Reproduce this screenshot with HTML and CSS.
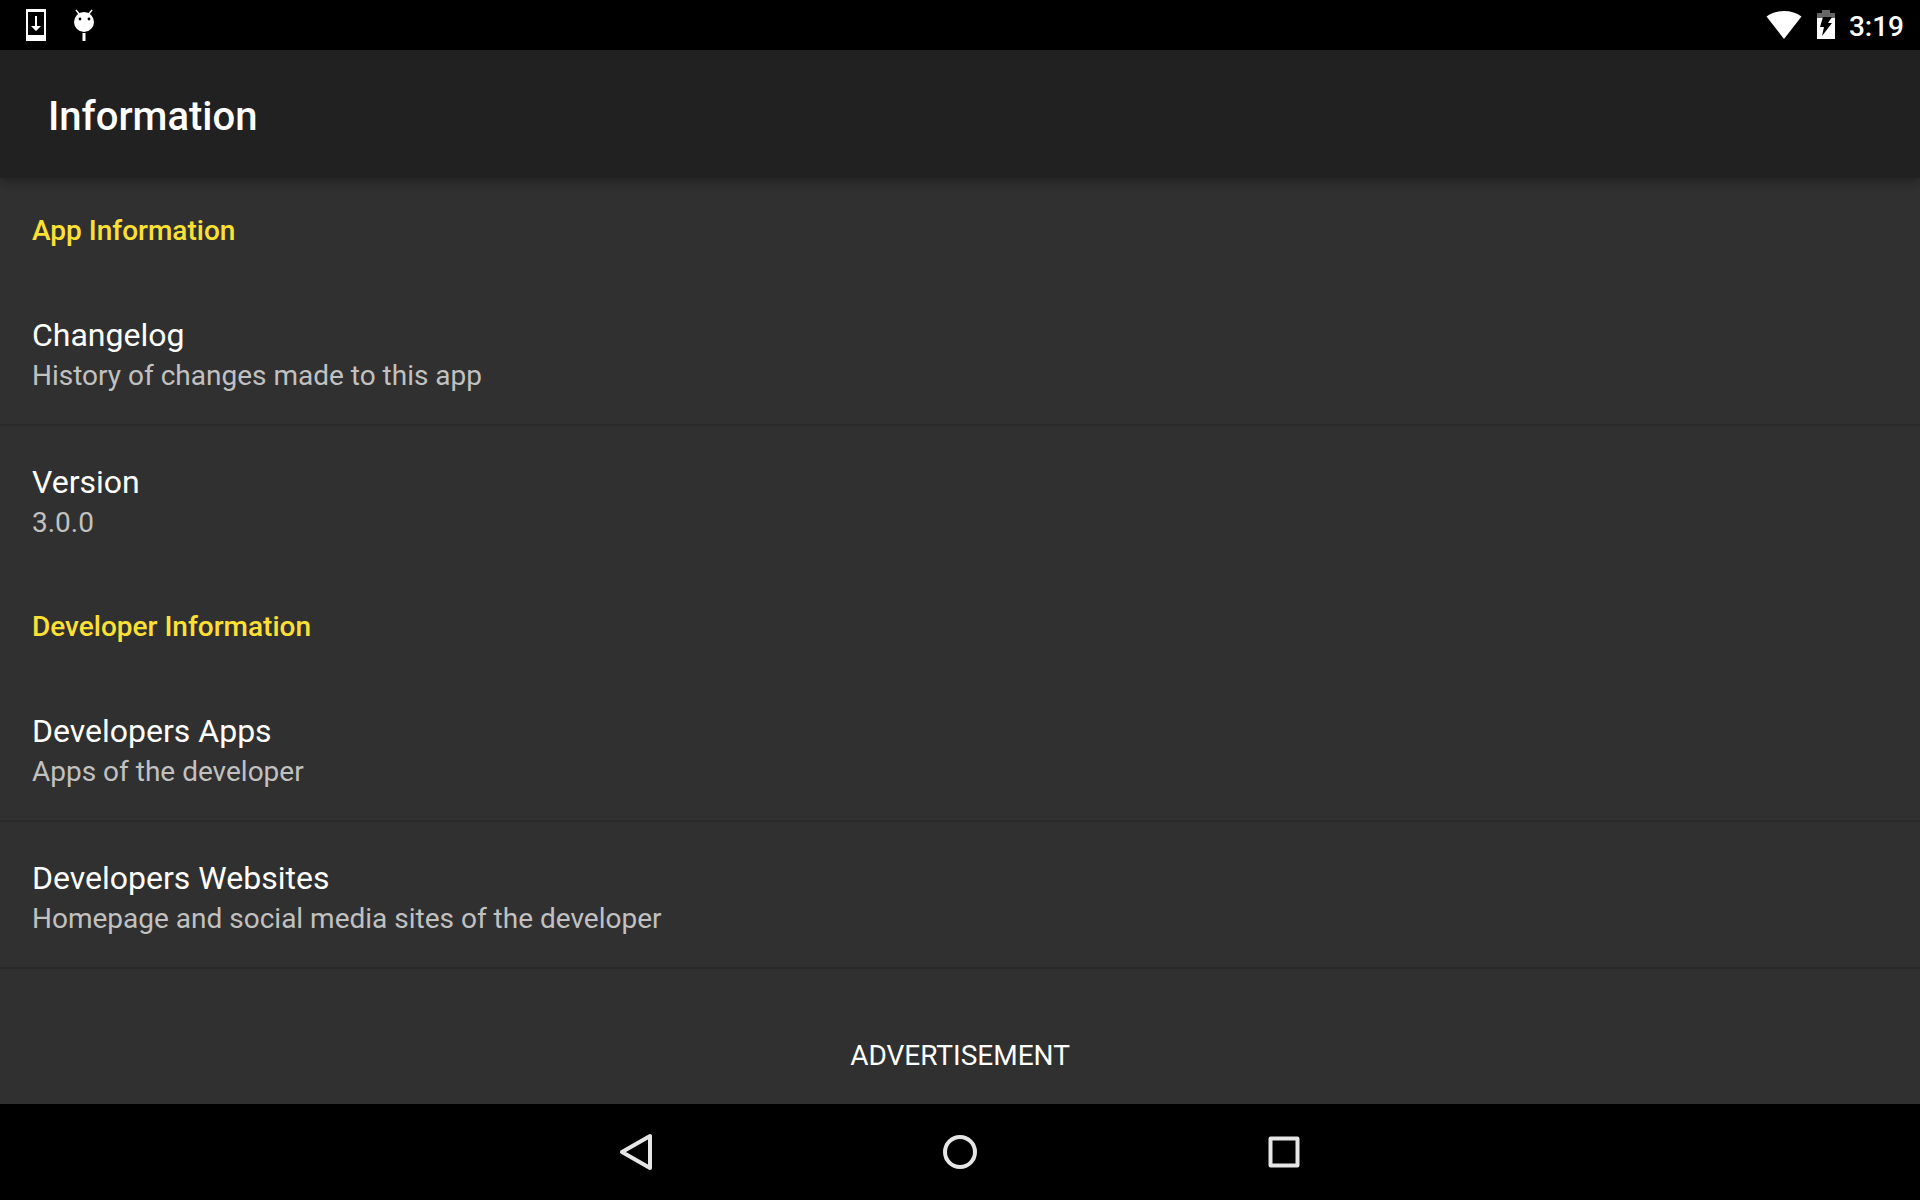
FILE: index.html
```
<!DOCTYPE html>
<html lang="en">
<head>
  <meta charset="UTF-8" />
  <meta name="viewport" content="width=device-width, initial-scale=1.0"/>
  <title>Information</title>
  <link rel="stylesheet" href="styles.css">
</head>
<body>

<div class="status-bar">
  <div class="status-icons">
    <svg width="22" height="32" viewBox="0 0 22 32" fill="#fff">
      <path fill-rule="evenodd" d="M1 0h20v32H1zM3 3v23h16V3z"/>
      <path d="M10 7h2v10h4l-5 5-5-5h4z"/>
    </svg>
    <svg width="22" height="32" viewBox="0 0 22 32">
      <path d="M3 1l4 5M19 1l-4 5" stroke="#fff" stroke-width="1.5" fill="none"/>
      <circle cx="11" cy="13" r="10" fill="#fff"/>
      <circle cx="7" cy="10" r="1.4"/>
      <circle cx="16" cy="10" r="1.4"/>
      <path d="M9.5 24h3v8h-3z" fill="#fff"/>
    </svg>
  </div>
  <div class="status-right">
    <svg class="wifi" width="36" height="30" viewBox="0 0 36 30" fill="#fff">
      <path d="M18 29L.5 6.500Q8 1 18 1T35.500 6.500z"/>
    </svg>
    <svg class="battery" width="20" height="30" viewBox="0 0 20 30">
      <path d="M6 0h8v3h5v5H1V3h5z" fill="#666"/>
      <path d="M1 8h18v21H1z" fill="#fff"/>
      <path d="M7 7h9l-4 6h4L6 26l2-9H4z"/>
    </svg>
    <span class="clock">3:19</span>
  </div>
</div>

<header class="toolbar">
  <h1>Information</h1>
</header>

<main>
  <section>
    <h2>App Information</h2>
    <ul>
      <li><a href="#changelog"><span class="title">Changelog</span><span class="summary">History of changes made to this app</span></a></li>
      <li><a href="#version"><span class="title">Version</span><span class="summary">3.0.0</span></a></li>
    </ul>
  </section>

  <section>
    <h2>Developer Information</h2>
    <ul>
      <li><a href="#apps"><span class="title">Developers Apps</span><span class="summary">Apps of the developer</span></a></li>
      <li><a href="#websites"><span class="title">Developers Websites</span><span class="summary">Homepage and social media sites of the developer</span></a></li>
    </ul>
  </section>
</main>

<div class="ad">ADVERTISEMENT</div>

<nav>
  <button type="button" aria-label="Back">
    <svg width="36" height="40" viewBox="0 0 36 40"><path d="M32 4v32L4 20z"/></svg>
  </button>
  <button type="button" aria-label="Home">
    <svg width="36" height="40" viewBox="0 0 36 40"><circle cx="18" cy="20" r="15"/></svg>
  </button>
  <button type="button" aria-label="Recent apps">
    <svg width="36" height="40" viewBox="0 0 36 40"><path d="M4.500 6.500h27v27h-27z"/></svg>
  </button>
</nav>

</body>
</html>
```

FILE: styles.css
```
body {
  margin: 0;
  min-height: 100vh;
  display: flex;
  flex-direction: column;
  font-family: Roboto, sans-serif;
  background-color: #303030;
  color: #fff;
}

h1, h2, ul {
  margin: 0;
  padding: 0;
}

svg {
  display: block;
}

.status-bar {
  display: flex;
  justify-content: space-between;
  align-items: center;
  height: 50px;
  padding: 0 16px 0 25px;
  background-color: #000;
  font-size: 28px;
  font-weight: 500;
  line-height: 32px;
}

.status-icons {
  display: flex;
  gap: 26px;
}

.status-right {
  display: flex;
  align-items: center;
}

.battery {
  margin: 0 13px 0 14px;
}

.clock {
  padding-top: 4px;
}

.toolbar {
  padding: 47px 48px 41px;
  background-color: #212121;
  box-shadow: 0 4px 10px rgba(0, 0, 0, 0.3);
}

h1 {
  font-size: 40px;
  font-weight: 500;
  line-height: 40px;
}

main {
  flex: 1;
}

section {
  padding-bottom: 1px;
}

h2 {
  padding: 36px 32px 32px;
  color: #fde034;
  font-size: 28px;
  font-weight: 500;
  line-height: 33px;
}

ul {
  list-style: none;
}

li {
  border-bottom: 2px solid #2a2a2a;
}

/* no divider between the last item and the next category */
section:first-child li:last-child {
  border-color: transparent;
}

a {
  display: block;
  padding: 36px 32px 29px;
  color: #fff;
  text-decoration: none;
}

.title, .summary {
  display: block;
}

.title {
  font-size: 32px;
  line-height: 40px;
}

.summary {
  margin-top: 2px;
  color: #c1c1c1;
  font-size: 28px;
  line-height: 38px;
}

.ad {
  padding: 32px;
  font-size: 28px;
  line-height: 33px;
  text-align: center;
}

nav {
  display: flex;
  justify-content: center;
  height: 96px;
  background-color: #000;
}

button {
  display: flex;
  justify-content: center;
  align-items: center;
  width: 324px;
  padding: 0;
  border: none;
  background: none;
  cursor: pointer;
}

button svg {
  fill: none;
  stroke: #e6e6e6;
  stroke-width: 4;
  stroke-linejoin: round;
}
```
